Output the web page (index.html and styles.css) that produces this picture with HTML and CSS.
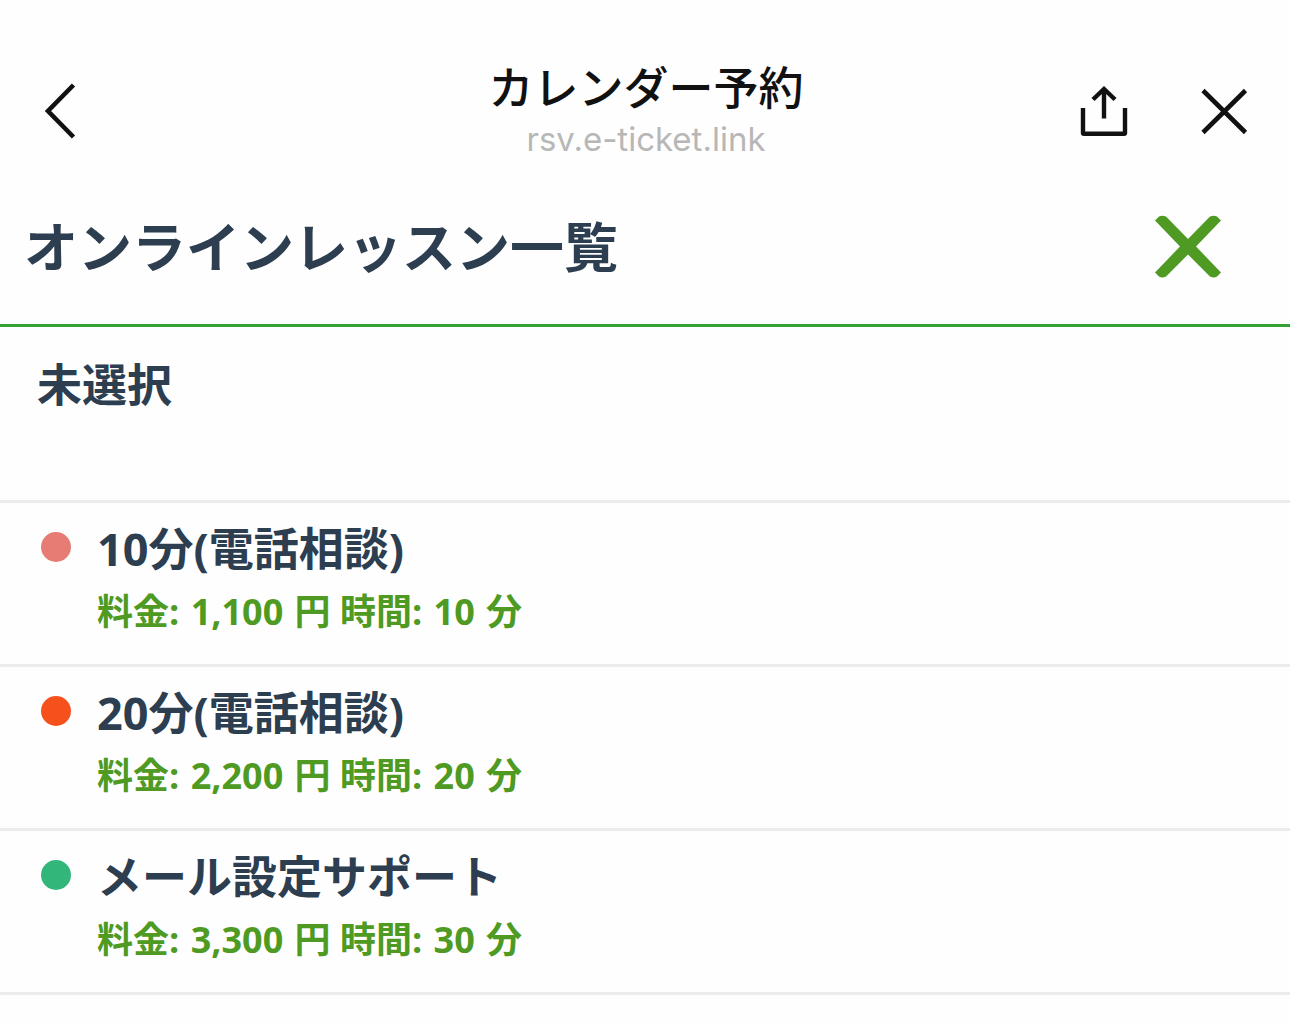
FILE: index.html
```html
<!DOCTYPE html>
<html lang="ja">
<head>
<meta charset="utf-8">
<meta name="viewport" content="width=device-width, initial-scale=1">
<title>カレンダー予約</title>
<link rel="stylesheet" href="styles.css">
</head>
<body>
<header class="browser-bar">
  <div class="bar-side">
    <button class="icon-button" type="button" aria-label="戻る">
      <svg width="32" height="56" viewBox="0 0 32 56" fill="none" stroke="currentColor" stroke-width="4.600"><path d="M29.500 2 4 28 29.500 54"/></svg>
    </button>
  </div>
  <div class="bar-center">
    <p class="bar-title">カレンダー予約</p>
    <p class="bar-url">rsv.e-ticket.link</p>
  </div>
  <div class="bar-side bar-actions">
    <button class="icon-button" type="button" aria-label="共有">
      <svg width="48" height="52" viewBox="0 0 48 52" fill="none" stroke="currentColor" stroke-width="4.400"><path d="M3 23V48Q3 48.800 4 48.800H44Q45 48.800 45 48V23"/><path d="M24 33.500V4M13 14.500 24 4 35 14.500"/></svg>
    </button>
    <button class="icon-button" type="button" aria-label="閉じる">
      <svg width="48" height="48" viewBox="0 0 48 48" fill="none" stroke="currentColor" stroke-width="4.600"><path d="M3 3.500 45.500 45.500M45.500 3.500 3 45.500"/></svg>
    </button>
  </div>
</header>
<main>
  <div class="panel-header">
    <h1 class="panel-title">オンラインレッスン一覧</h1>
    <button class="icon-button panel-close" type="button" aria-label="一覧を閉じる">
      <svg width="68" height="64" viewBox="0 0 68 64" fill="currentColor"><path d="M1 5.500 5 1.500Q8 0 12 1.500L34 24 56 1.500Q60 0 63 1.500L67 5.500 42 31.500 67 57.500 63 61.500Q60 63.500 56 61.500L34 39.500 12 61.500Q8 63.500 5 61.500L1 57.500 26 31.500Z"/></svg>
    </button>
  </div>
  <ul class="lessons">
    <li><button class="lesson lesson-none" type="button"><span class="lesson-name">未選択</span></button></li>
    <li><button class="lesson" type="button">
      <span class="dot dot-pink"></span>
      <span class="lesson-text"><span class="lesson-name">10分(電話相談)</span><span class="lesson-meta">料金: <span class="value">1,100</span> 円 時間: <span class="value">10</span> 分</span></span>
    </button></li>
    <li><button class="lesson" type="button">
      <span class="dot dot-orange"></span>
      <span class="lesson-text"><span class="lesson-name">20分(電話相談)</span><span class="lesson-meta">料金: <span class="value">2,200</span> 円 時間: <span class="value">20</span> 分</span></span>
    </button></li>
    <li><button class="lesson" type="button">
      <span class="dot dot-green"></span>
      <span class="lesson-text"><span class="lesson-name">メール設定サポート</span><span class="lesson-meta">料金: <span class="value">3,300</span> 円 時間: <span class="value">30</span> 分</span></span>
    </button></li>
  </ul>
</main>
</body>
</html>
```
FILE: styles.css
```css
* {
  box-sizing: border-box;
}

body {
  margin: 0;
  background: #fefefe;
  color: #2c3e50;
  font-family: "Open Sans", "Noto Sans CJK JP", sans-serif;
}

button {
  margin: 0;
  border: 0;
  background: none;
  color: inherit;
  font: inherit;
  cursor: pointer;
}

svg {
  display: block;
}

.browser-bar {
  display: grid;
  grid-template-columns: 1fr auto 1fr;
  align-items: center;
  padding: 60px 42px 12px 44px;
  color: #111;
}

.icon-button {
  padding: 0;
}

.bar-side {
  display: flex;
  align-items: center;
}

.bar-actions {
  justify-content: flex-end;
  gap: 72px;
}

.bar-center {
  text-align: center;
}

.bar-title,
.bar-url {
  margin: 0;
}

.bar-title {
  font-size: 45px;
  font-weight: 500;
  line-height: 56px;
}

.bar-url {
  color: #b7b7b7;
  font-family: Inter, sans-serif;
  font-size: 33px;
  line-height: 46px;
}

.panel-header {
  display: flex;
  align-items: center;
  justify-content: space-between;
  padding: 32px 68px 36px 24px;
  border-bottom: 3px solid #33a133;
}

.panel-title {
  margin: 0;
  font-size: 54px;
  font-weight: 700;
  line-height: 82px;
}

.panel-close {
  color: #4e9a22;
}

.lessons {
  margin: 0;
  padding: 0;
  list-style: none;
}

.lesson {
  display: flex;
  gap: 26px;
  width: 100%;
  min-height: 164px;
  padding: 16px 41px;
  border-bottom: 3px solid #ececec;
  text-align: left;
}

.lesson-none {
  min-height: 176px;
  padding: 28px 37px;
}

.lesson-text {
  display: grid;
  align-content: start;
}

.lesson-name {
  font-size: 45px;
  font-weight: 700;
  line-height: 60px;
}

.lesson-meta {
  color: #4e9a22;
  font-size: 36px;
  font-weight: 700;
  line-height: 66px;
}

.value {
  margin: 0 2px;
}

.dot {
  flex: none;
  width: 30px;
  height: 30px;
  margin-top: 13px;
  border-radius: 50%;
}

.dot-pink {
  background: #e67c73;
}

.dot-orange {
  background: #f6511d;
}

.dot-green {
  background: #33b679;
}
```
